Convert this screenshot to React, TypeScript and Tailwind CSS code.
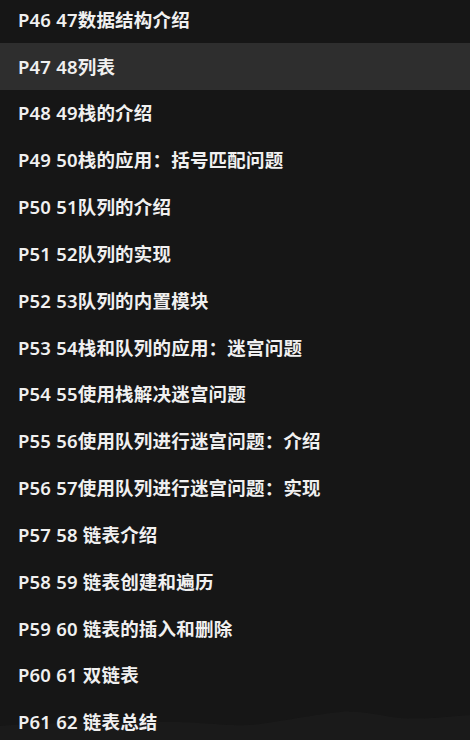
import React from "react";

const items = [
  "P46 47数据结构介绍",
  "P47 48列表",
  "P48 49栈的介绍",
  "P49 50栈的应用：括号匹配问题",
  "P50 51队列的介绍",
  "P51 52队列的实现",
  "P52 53队列的内置模块",
  "P53 54栈和队列的应用：迷宫问题",
  "P54 55使用栈解决迷宫问题",
  "P55 56使用队列进行迷宫问题：介绍",
  "P56 57使用队列进行迷宫问题：实现",
  "P57 58 链表介绍",
  "P58 59 链表创建和遍历",
  "P59 60 链表的插入和删除",
  "P60 61 双链表",
  "P61 62 链表总结",
];

export default function App() {
  return (
    <div
      className="relative w-[470px] h-[740px] overflow-hidden bg-[#161616]"
      style={{ fontFamily: '"Noto Sans", "Noto Sans CJK SC", sans-serif' }}
    >
      <svg
        className="absolute left-0 bottom-0 w-[470px] h-[30px]"
        viewBox="0 0 470 30"
        preserveAspectRatio="none"
      >
        <path
          d="M0 16 C 40 12, 80 14, 140 12 C 200 10, 230 18, 260 14 C 300 8, 320 4, 340 2 C 360 0, 380 6, 400 8 C 430 10, 450 6, 470 5 L470 30 L0 30 Z"
          fill="#1a1a1a"
        />
      </svg>
      <div className="relative flex flex-col mt-[-3.5px]">
        {items.map((t, i) => (
          <div
            key={i}
            className={`h-[46.85px] shrink-0 flex items-center pl-[18px] text-[18.5px] tracking-[0.2px] font-semibold text-[#f0f0f0] leading-none ${
              i === 1 ? "bg-[#2e2e2e]" : ""
            }`}
          >
            {t}
          </div>
        ))}
      </div>
    </div>
  );
}
